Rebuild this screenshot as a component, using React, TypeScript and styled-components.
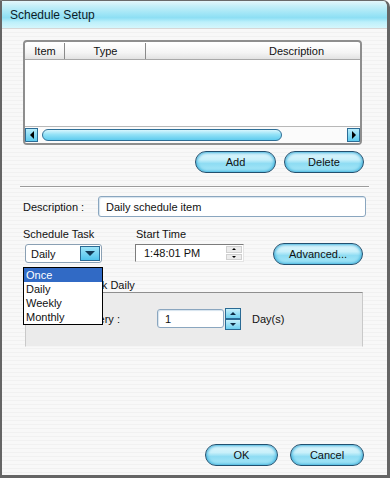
import * as React from 'react'
import styled, { createGlobalStyle } from 'styled-components'

const GlobalStyle = createGlobalStyle`
  html, body {
    margin: 0;
    padding: 0;
    background: #ffffff;
  }
  body {
    font-family: "Liberation Sans", Arial, sans-serif;
    font-size: 11px;
    color: #111;
  }
`

const Window = styled.div`
  width: 390px;
  height: 478px;
  box-sizing: border-box;
  display: flex;
  flex-direction: column;
  border: 2px solid #656565;
  border-top: 1px solid #6a6a6a;
  border-right-width: 3px;
  border-bottom-width: 3px;
  border-top-right-radius: 7px;
  overflow: hidden;
  background: repeating-linear-gradient(
    180deg,
    #f8f8f8 0px,
    #f8f8f8 3px,
    #f1f1f1 3px,
    #f1f1f1 4px
  );
`

const TitleBar = styled.div`
  height: 27px;
  flex: none;
  display: flex;
  align-items: center;
  padding-left: 8px;
  font-size: 12px;
  color: #0c1c28;
  border-bottom: 1px solid #d6d6d6;
  background: linear-gradient(
    180deg,
    #e4f7fb 0%,
    #c6eff8 18%,
    #a2e6f6 45%,
    #8ddff4 62%,
    #bdf0fb 78%,
    #d4f6fc 100%
  );
`

const Content = styled.div`
  flex: 1;
  display: flex;
  flex-direction: column;
  padding: 11px 21px 9px 21px;
`

const ListFrame = styled.div`
  width: 339px;
  height: 105px;
  box-sizing: border-box;
  border: 2px solid #8e8e8e;
  border-radius: 4px;
  background: #ffffff;
  display: flex;
  flex-direction: column;
  overflow: hidden;
`

const ListHeader = styled.div`
  height: 16px;
  margin-top: 1px;
  display: flex;
  overflow: hidden;
  border-bottom: 1px solid #a8a8a8;
  background: linear-gradient(180deg, #ffffff 0%, #f4f4f4 60%, #e2e2e2 100%);
`

const HeaderCell = styled.div<{ w: number }>`
  flex: none;
  width: ${({ w }) => w}px;
  box-sizing: border-box;
  border-right: 1px solid #8a8a8a;
  display: flex;
  align-items: center;
  justify-content: center;
  margin-left: 1px;
`

const ListBody = styled.div`
  flex: 1;
`

const HScroll = styled.div`
  height: 16px;
  display: flex;
  align-items: center;
  border-top: 1px solid #b8b8b8;
  background: #fbfbfb;
`

const ArrowBox = styled.div`
  width: 13px;
  height: 14px;
  flex: none;
  box-sizing: border-box;
  border: 1px solid #2c6c96;
  background: linear-gradient(180deg, #b8ecfa, #5ecbee);
  display: flex;
  align-items: center;
  justify-content: center;
`

const Thumb = styled.div`
  width: 240px;
  height: 12px;
  box-sizing: border-box;
  margin-left: 4px;
  border: 1px solid #2f6f97;
  border-radius: 6px;
  background: linear-gradient(180deg, #d8f6fd 0%, #94e2f7 45%, #5fcbee 100%);
`

const Spacer = styled.div`
  flex: 1;
`

const ButtonRow = styled.div<{ gap: number; top: number }>`
  display: flex;
  justify-content: flex-end;
  gap: ${({ gap }) => gap}px;
  margin-top: ${({ top }) => top}px;
  padding-right: 2px;
`

const GlassButton = styled.button<{ w: number }>`
  width: ${({ w }) => w}px;
  height: 22px;
  padding: 0;
  margin: 0;
  box-sizing: border-box;
  font-family: "Liberation Sans", Arial, sans-serif;
  font-size: 11px;
  color: #111;
  border: 1px solid #22506f;
  border-radius: 11px;
  background: linear-gradient(
    180deg,
    #e2f7fd 0%,
    #c8f0fa 38%,
    #8edcf3 58%,
    #a9e8f8 100%
  );
  box-shadow: inset 0 0 3px 1px #3fb1dc;
`

const Separator = styled.div`
  height: 1px;
  margin: 13px -3px 0 -3px;
  background: #9c9c9c;
  box-shadow: 0 1px 0 #ffffff;
`

const FieldRow = styled.div`
  display: flex;
  align-items: center;
  margin-top: 9px;
`

const Label = styled.span<{ w?: number }>`
  flex: none;
  width: ${({ w }) => (w ? `${w}px` : 'auto')};
`

const TextBox = styled.div<{ w: number; h: number }>`
  width: ${({ w }) => w}px;
  height: ${({ h }) => h}px;
  box-sizing: border-box;
  border: 1px solid #8aa6bf;
  border-radius: 3px;
  background: #ffffff;
  box-shadow: inset 1px 1px 1px #d5e3ee;
  display: flex;
  align-items: center;
  padding-left: 7px;
`

const LabelsRow = styled.div`
  display: flex;
  margin-top: 11px;
`

const ControlsRow = styled.div`
  display: flex;
  align-items: flex-start;
  margin-top: 3px;
`

const Combo = styled.div`
  position: relative;
  margin: 1px 0 0 2px;
  width: 77px;
  height: 19px;
  box-sizing: border-box;
  border: 1px solid #8aa0b4;
  border-radius: 3px;
  background: #ffffff;
  display: flex;
  align-items: center;
  padding-left: 5px;
`

const ComboButton = styled.div`
  margin-left: auto;
  margin-right: 1px;
  width: 20px;
  height: 15px;
  box-sizing: border-box;
  border: 1px solid #2a6a94;
  background: linear-gradient(180deg, #9fe4f8, #4fc3ec);
  display: flex;
  align-items: center;
  justify-content: center;
`

const DropList = styled.div`
  position: absolute;
  top: 22px;
  left: -3px;
  width: 80px;
  box-sizing: border-box;
  border: 1px solid #000000;
  background: #ffffff;
  z-index: 2;
`

const DropItem = styled.div<{ active?: boolean }>`
  height: 14px;
  line-height: 14px;
  padding-left: 2px;
  color: ${({ active }) => (active ? '#ffffff' : '#111')};
  background: ${({ active }) => (active ? '#316ac5' : 'transparent')};
`

const TimeBox = styled.div`
  margin: 1px 0 0 33px;
  width: 109px;
  height: 18px;
  box-sizing: border-box;
  border: 1px solid;
  border-color: #7c7c7c #e4e4e4 #e4e4e4 #7c7c7c;
  background: #ffffff;
  display: flex;
  align-items: center;
  padding-left: 8px;
`

const SmallSpin = styled.div`
  margin-left: auto;
  margin-right: 1px;
  width: 16px;
  height: 14px;
  display: flex;
  flex-direction: column;
  gap: 1px;
`

const SmallSpinHalf = styled.div`
  flex: 1;
  background: #ececec;
  border: 1px solid #d0d0d0;
  display: flex;
  align-items: center;
  justify-content: center;
`

const Group = styled.div`
  margin-top: 14px;
  display: flex;
  flex-direction: column;
`

const GroupTitle = styled.div`
  height: 13px;
  line-height: 13px;
  padding-left: 13px;
`

/* the part of a text that the open drop list covers keeps its room */
const Covered = styled.span`
  visibility: hidden;
`

const GroupPanel = styled.div`
  margin: 0 0 0 2px;
  width: 338px;
  height: 55px;
  box-sizing: border-box;
  border: 1px solid #c9c9c9;
  border-top-color: #8f8f8f;
  border-bottom-color: #f4f4f4;
  background: #ebebeb;
  display: flex;
  align-items: center;
  padding-bottom: 2px;
`

const EveryLabel = styled.span`
  width: 94px;
  text-align: right;
  margin-right: 37px;
`

const SpinButtons = styled.div`
  margin-left: 1px;
  width: 16px;
  height: 22px;
  display: flex;
  flex-direction: column;
`

const SpinHalf = styled.div`
  flex: 1;
  box-sizing: border-box;
  border: 1px solid #2a6a94;
  background: linear-gradient(180deg, #c6f0fb, #6dd0f0);
  display: flex;
  align-items: center;
  justify-content: center;
`

const Unit = styled.span`
  margin-left: 11px;
`

function Tri({
  dir,
  size = 5,
  color = '#000',
}: {
  dir: 'up' | 'down' | 'left' | 'right'
  size?: number
  color?: string
}) {
  const points = {
    up: '0,5 5,0 10,5',
    down: '0,0 10,0 5,5',
    left: '5,0 5,10 0,5',
    right: '0,0 0,10 5,5',
  }[dir]
  const vertical = dir === 'up' || dir === 'down'
  return (
    <svg
      width={vertical ? size * 2 : size}
      height={vertical ? size : size * 2}
      viewBox={vertical ? '0 0 10 5' : '0 0 5 10'}
    >
      <polygon points={points} fill={color} />
    </svg>
  )
}

export default function App() {
  return (
    <>
      <GlobalStyle />
      <Window>
        <TitleBar>Schedule Setup</TitleBar>
        <Content>
          <ListFrame>
            <ListHeader>
              <HeaderCell w={39}>Item</HeaderCell>
              <HeaderCell w={80}>Type</HeaderCell>
              <HeaderCell w={300}>Description</HeaderCell>
            </ListHeader>
            <ListBody />
            <HScroll>
              <ArrowBox>
                <Tri dir="left" size={4} />
              </ArrowBox>
              <Thumb />
              <Spacer />
              <ArrowBox>
                <Tri dir="right" size={4} />
              </ArrowBox>
            </HScroll>
          </ListFrame>

          <ButtonRow gap={8} top={6}>
            <GlassButton w={81}>Add</GlassButton>
            <GlassButton w={80}>Delete</GlassButton>
          </ButtonRow>

          <Separator />

          <FieldRow>
            <Label w={75}>Description :</Label>
            <TextBox w={268} h={21}>
              Daily schedule item
            </TextBox>
          </FieldRow>

          <LabelsRow>
            <Label w={113}>Schedule Task</Label>
            <Label>Start Time</Label>
          </LabelsRow>

          <ControlsRow>
            <Combo>
              Daily
              <ComboButton>
                <Tri dir="down" size={5} color="#123a56" />
              </ComboButton>
              <DropList>
                <DropItem active>Once</DropItem>
                <DropItem>Daily</DropItem>
                <DropItem>Weekly</DropItem>
                <DropItem>Monthly</DropItem>
              </DropList>
            </Combo>
            <TimeBox>
              1:48:01 PM
              <SmallSpin>
                <SmallSpinHalf>
                  <Tri dir="up" size={2} />
                </SmallSpinHalf>
                <SmallSpinHalf>
                  <Tri dir="down" size={2} />
                </SmallSpinHalf>
              </SmallSpin>
            </TimeBox>
            <Spacer />
            <GlassButton w={90} style={{ marginRight: 3 }}>
              Advanced...
            </GlassButton>
          </ControlsRow>

          <Group>
            <GroupTitle>
              <Covered>Schedule Tas</Covered>k Daily
            </GroupTitle>
            <GroupPanel>
              <EveryLabel>
                <Covered>Run ev</Covered>ery :
              </EveryLabel>
              <TextBox w={67} h={19}>
                1
              </TextBox>
              <SpinButtons>
                <SpinHalf>
                  <Tri dir="up" size={3} color="#0e2c44" />
                </SpinHalf>
                <SpinHalf>
                  <Tri dir="down" size={3} color="#0e2c44" />
                </SpinHalf>
              </SpinButtons>
              <Unit>Day(s)</Unit>
            </GroupPanel>
          </Group>

          <Spacer />

          <ButtonRow gap={12} top={0}>
            <GlassButton w={73}>OK</GlassButton>
            <GlassButton w={74}>Cancel</GlassButton>
          </ButtonRow>
        </Content>
      </Window>
    </>
  )
}
